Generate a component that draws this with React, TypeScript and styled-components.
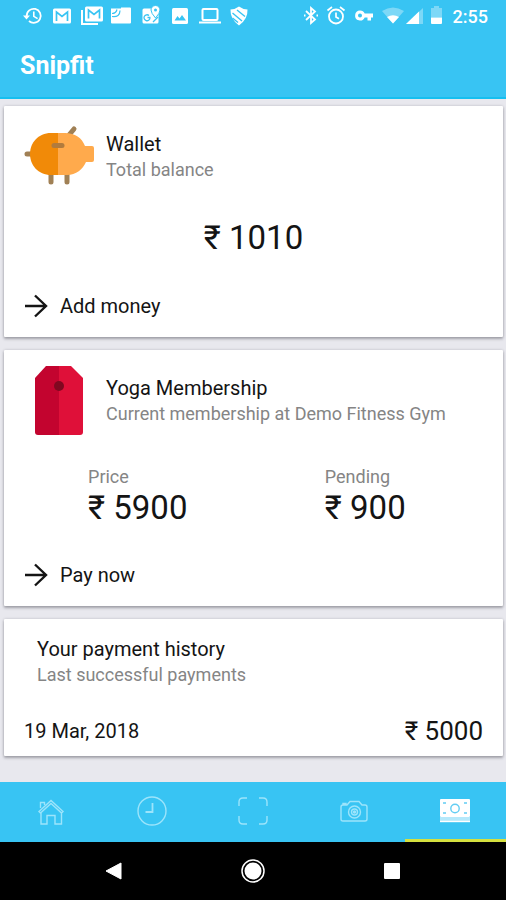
import React from "react";
import styled, { createGlobalStyle } from "styled-components";

const GlobalStyle = createGlobalStyle`
  *, *::before, *::after { box-sizing: border-box; }
  body {
    margin: 0;
    background: #e8e8ee;
    color: #141414;
    font-family: Roboto, "Noto Sans", sans-serif;
  }
  button { font: inherit; color: inherit; border: 0; padding: 0; background: none; cursor: pointer; }
  h1, h2, p, ul { margin: 0; padding: 0; font-weight: 400; }
  svg { display: block; flex: none; }
`;

const Screen = styled.div`
  display: flex;
  flex-direction: column;
  min-height: 100vh;
`;

const Header = styled.header`
  background: #38c4f3;
  border-bottom: 2px solid #16bff0;
  color: #fff;
`;

const StatusBar = styled.div`
  display: flex;
  justify-content: space-between;
  align-items: center;
  height: 32px;
  padding: 0 18px 0 22px;
`;

const Notifications = styled.div`
  display: flex;
  justify-content: space-between;
  width: 228px;
`;

const SystemIcons = styled.div`
  display: flex;
  align-items: center;
  gap: 7px;
`;

const Reception = styled.div`
  display: flex;
  gap: 2px;
`;

const Time = styled.time`
  margin-left: 3px;
  font-size: 18px;
  font-weight: 500;
`;

const AppTitle = styled.h1`
  padding: 19px 20px 16px;
  font-size: 25px;
  line-height: 30px;
  font-weight: 700;
`;

const Main = styled.main`
  flex: 1;
  display: flex;
  flex-direction: column;
  gap: 13px;
  padding: 7px 3px 26px 4px;
`;

const Card = styled.section`
  padding: 15px 20px 19px;
  background: #fff;
  border-radius: 1px;
  box-shadow: 0 2px 3px rgba(30, 30, 40, 0.32), 0 0 3px rgba(30, 30, 40, 0.18);
`;

const HistoryCard = styled(Card)`
  padding-top: 18px;
  padding-bottom: 9px;
`;

const CardHeader = styled.div`
  display: flex;
  align-items: center;
  gap: 12px;
`;

const CardHeading = styled.div`
  padding-top: 2px;
`;

const HistoryHeader = styled.div`
  padding-left: 13px;
`;

const Title = styled.h2`
  font-size: 20px;
  line-height: 25px;
`;

const Subtitle = styled.p`
  font-size: 18px;
  line-height: 25px;
  color: #858585;
`;

const Amount = styled.p`
  font-size: 33px;
  line-height: 40px;
`;

const Balance = styled(Amount)`
  margin: 27px 0 36px;
  text-align: center;
`;

const Stats = styled.div`
  display: grid;
  grid-template-columns: 1fr 1fr;
  justify-items: center;
  margin: 30px 0 35px;
  padding-right: 4px;
`;

const StatLabel = styled.p`
  font-size: 18px;
  line-height: 23px;
  color: #858585;
`;

const Action = styled.button`
  display: flex;
  align-items: center;
  gap: 12px;
  font-size: 20px;
  line-height: 24px;
`;

const PaymentRow = styled.li`
  display: flex;
  justify-content: space-between;
  align-items: center;
  margin-top: 28px;
  list-style: none;
  font-size: 20px;
  line-height: 32px;
`;

const PaymentAmount = styled.span`
  font-size: 26px;
`;

const TabBar = styled.nav`
  display: grid;
  grid-template-columns: repeat(5, 1fr);
  height: 60px;
  background: #38c4f3;
`;

const Tab = styled.button<{ $active?: boolean }>`
  display: flex;
  justify-content: center;
  align-items: center;
  padding-top: 1px;
  color: ${(p) => (p.$active ? "#fff" : "#9ce4fb")};
  border-bottom: 3px solid ${(p) => (p.$active ? "#d5e03f" : "transparent")};
`;

const SystemNav = styled.nav`
  display: grid;
  grid-template-columns: repeat(3, 1fr);
  height: 58px;
  padding: 0 44px;
  background: #000;
  color: #fff;
`;

const SystemButton = styled.button`
  display: flex;
  justify-content: center;
  align-items: center;
`;

type GlyphProps = { w?: number; children: React.ReactNode };

const StatusGlyph = ({ w = 22, children }: GlyphProps) => (
  <svg width={w} height="22" viewBox={`0 0 ${w} 22`} fill="currentColor" aria-hidden="true">
    {children}
  </svg>
);

const TabGlyph = ({ children }: { children: React.ReactNode }) => (
  <svg width="32" height="32" viewBox="0 0 32 32" fill="none" stroke="currentColor" strokeWidth="1.4" aria-hidden="true">
    {children}
  </svg>
);

const blue = "#38c4f3";

const PiggyBank = () => (
  <svg width="70" height="70" viewBox="0 0 70 70" aria-hidden="true">
    <g stroke="#a08055" strokeWidth="5" strokeLinecap="round">
      <path d="M3 33H8M27 50V61M43 50V61M45 14L50 8" />
    </g>
    <path d="M34 12V54H27C14 54 6 44 6 33S14 12 27 12Z" fill="#f18a08" />
    <path d="M34 12H41C51 12 58 17 61 25H68Q70 25 70 27V39Q70 41 68 41H62C59 48 52 54 43 54H34Z" fill="#ffaa4c" />
    <path d="M30 24.500H38" stroke="#b17b3d" strokeWidth="5" strokeLinecap="round" />
  </svg>
);

const PriceTag = () => (
  <svg width="70" height="70" viewBox="0 0 70 70" aria-hidden="true">
    <path d="M22 1H35V70H14Q11 70 11 67V13Z" fill="#c3042f" />
    <path d="M35 1H47L59 13V67Q59 70 56 70H35Z" fill="#df1039" />
    <circle cx="35" cy="21" r="5" fill="#7f0820" />
  </svg>
);

const ArrowRight = () => (
  <svg width="24" height="24" viewBox="0 0 24 24" fill="none" stroke="currentColor" strokeWidth="2.400" aria-hidden="true">
    <path d="M1 12H22M11 1.500L22 12L11 22.500" />
  </svg>
);

const NotificationIcons = () => (
  <Notifications>
    <StatusGlyph>
      <path d="M4.700 11A7 7 0 1 1 7 16" fill="none" stroke="currentColor" strokeWidth="1.800" />
      <path d="M1 10.500H8L4.500 14.500ZM11 6.500H12.600V11L16 13L15.200 14.300L11 11.800Z" />
    </StatusGlyph>
    <StatusGlyph>
      <rect x="2" y="3.500" width="18" height="15" rx="1.500" />
      <path d="M5.500 16V7L11 11.500L16.500 7V16" fill="none" stroke={blue} strokeWidth="1.700" />
    </StatusGlyph>
    <StatusGlyph>
      <path d="M1 5V19H17" fill="none" stroke="currentColor" strokeWidth="2" />
      <rect x="4" y="1.500" width="18" height="15" rx="1.500" />
      <path d="M7.500 13.500V5L13 9.500L18.500 5V13.500" fill="none" stroke={blue} strokeWidth="1.700" />
    </StatusGlyph>
    <StatusGlyph>
      <path d="M1 3.500H11V2.500H20Q21 2.500 21 3.500V17.500Q21 18.500 20 18.500H2Q1 18.500 1 17.500Z" />
      <path d="M2 11.500Q10 12.500 10 5.500M2 8.500Q6 8.500 7 4.500" fill="none" stroke={blue} strokeWidth="1.200" />
    </StatusGlyph>
    <StatusGlyph>
      <rect x="2.500" y="3.500" width="16" height="15" rx="1.500" />
      <path d="M15.500 0.500A4.500 4.500 0 0 1 20 5Q20 8 15.500 13Q11 8 11 5A4.500 4.500 0 0 1 15.500 0.500Z" stroke={blue} />
      <circle cx="15.500" cy="5" r="1.500" fill={blue} />
      <path d="M10.500 12.500H7.500M10 13A3 3 0 1 1 9 10.500M13 17L18 12" fill="none" stroke={blue} strokeWidth="1.300" />
    </StatusGlyph>
    <StatusGlyph>
      <rect x="3" y="3" width="16" height="16" rx="1.500" />
      <path d="M5.500 15.500L8.500 11L10.500 13.500L13 10L17 15.500Z" fill={blue} />
    </StatusGlyph>
    <StatusGlyph>
      <rect x="3.500" y="4" width="15" height="11" rx="1" fill="none" stroke="currentColor" strokeWidth="2" />
      <path d="M0 16.500H22V18.500H0Z" />
    </StatusGlyph>
    <StatusGlyph>
      <path d="M2.500 4.500Q7 4.500 11 1.500Q15 4.500 19.500 4.500Q20 14 11 20.500Q2 14 2.500 4.500Z" />
      <path d="M4.500 8L14 16M9 5L17 11.500M4.500 13L10 17.500" fill="none" stroke={blue} strokeWidth="1.400" />
    </StatusGlyph>
  </Notifications>
);

const DeviceIcons = () => (
  <>
    <StatusGlyph w={16}>
      <path d="M3 6L12 14.500L8 18V3L12 6.500L3 15M13.500 10.500H15M1 10.500H2.500" fill="none" stroke="currentColor" strokeWidth="1.800" />
    </StatusGlyph>
    <StatusGlyph w={20}>
      <circle cx="10" cy="11.500" r="7" fill="none" stroke="currentColor" strokeWidth="1.800" />
      <path d="M1.500 5.500L6 2M18.500 5.500L14 2M10 7.500V12L13 13.800" fill="none" stroke="currentColor" strokeWidth="1.700" />
    </StatusGlyph>
    <StatusGlyph w={22}>
      <path fillRule="evenodd" d="M7 5.500A5 5 0 0 1 11.700 8.500H20V12.500H18V15.500H14.500V12.500H11.700A5 5 0 1 1 7 5.500ZM7 8.500A2 2 0 1 0 7 12.500A2 2 0 1 0 7 8.500Z" />
    </StatusGlyph>
    <Reception>
      <StatusGlyph w={22}>
        <path opacity="0.350" d="M0 6Q11 -1 22 6L11 18.500Z" />
        <path d="M5 12Q11 8.500 17 12L11 18.500Z" />
      </StatusGlyph>
      <StatusGlyph w={18}>
        <path opacity="0.350" d="M17 3V19H0Z" />
        <path d="M13 6.500V19H0Z" />
      </StatusGlyph>
    </Reception>
    <StatusGlyph w={12}>
      <path opacity="0.350" d="M0 3H3V1H8V3H11V12.500H0Z" />
      <path d="M0 12.500H11V18Q11 19 10 19H1Q0 19 0 18Z" />
    </StatusGlyph>
  </>
);

const App = () => (
  <Screen>
    <GlobalStyle />
    <Header>
      <StatusBar>
        <NotificationIcons />
        <SystemIcons>
          <DeviceIcons />
          <Time>2:55</Time>
        </SystemIcons>
      </StatusBar>
      <AppTitle>Snipfit</AppTitle>
    </Header>

    <Main>
      <Card>
        <CardHeader>
          <PiggyBank />
          <CardHeading>
            <Title>Wallet</Title>
            <Subtitle>Total balance</Subtitle>
          </CardHeading>
        </CardHeader>
        <Balance>₹ 1010</Balance>
        <Action type="button">
          <ArrowRight />
          Add money
        </Action>
      </Card>

      <Card>
        <CardHeader>
          <PriceTag />
          <CardHeading>
            <Title>Yoga Membership</Title>
            <Subtitle>Current membership at Demo Fitness Gym</Subtitle>
          </CardHeading>
        </CardHeader>
        <Stats>
          <div>
            <StatLabel>Price</StatLabel>
            <Amount>₹ 5900</Amount>
          </div>
          <div>
            <StatLabel>Pending</StatLabel>
            <Amount>₹ 900</Amount>
          </div>
        </Stats>
        <Action type="button">
          <ArrowRight />
          Pay now
        </Action>
      </Card>

      <HistoryCard>
        <HistoryHeader>
          <Title>Your payment history</Title>
          <Subtitle>Last successful payments</Subtitle>
        </HistoryHeader>
        <ul>
          <PaymentRow>
            <span>19 Mar, 2018</span>
            <PaymentAmount>₹ 5000</PaymentAmount>
          </PaymentRow>
        </ul>
      </HistoryCard>
    </Main>

    <TabBar aria-label="Sections">
      <Tab type="button" aria-label="Home">
        <TabGlyph>
          <path d="M4 16.500L16 5.500L28 16.500L26.500 18L16 8.500L5.500 18ZM5.500 13V7.500H9.500V10M6 18V29H12V20.500H20V29H26.500V18M12 20.500H20" />
        </TabGlyph>
      </Tab>
      <Tab type="button" aria-label="Schedule">
        <TabGlyph>
          <circle cx="16" cy="16" r="14" />
          <path d="M16.500 8V17H9.500" strokeWidth="1.800" />
        </TabGlyph>
      </Tab>
      <Tab type="button" aria-label="Scan">
        <TabGlyph>
          <path d="M10 3H6Q2 3 2 7V11M22 3H26Q30 3 30 7V11M2 21V25Q2 29 6 29H10M30 21V25Q30 29 26 29H22" />
        </TabGlyph>
      </Tab>
      <Tab type="button" aria-label="Camera">
        <TabGlyph>
          <path d="M5 10H9L12 6.500H21L24 10H27Q29 10 29 12V24Q29 26 27 26H5Q3 26 3 24V12Q3 10 5 10ZM5 10V8.500H8V10" />
          <circle cx="16.500" cy="17" r="6" />
          <circle cx="16.500" cy="17" r="3" />
          <circle cx="16.500" cy="17" r="1" fill="currentColor" />
        </TabGlyph>
      </Tab>
      <Tab type="button" aria-label="Payments" aria-current="page" $active>
        <TabGlyph>
          <rect x="1" y="4" width="30" height="18" rx="1" fill="currentColor" stroke="none" />
          <path d="M1 22V27H31V22" fill="#b5e9fb" stroke="none" />
          <path d="M1 26.500H31" />
          <g stroke="#62cdf3">
            <circle cx="16" cy="13.500" r="4.200" />
            <path d="M4 8H7M25 8H28M4 18H7M25 18H28" />
          </g>
        </TabGlyph>
      </Tab>
    </TabBar>

    <SystemNav aria-label="System">
      <SystemButton type="button" aria-label="Back">
        <svg width="18" height="18" viewBox="0 0 18 18" fill="currentColor" aria-hidden="true">
          <path d="M16 1V17L1 9Z" strokeLinejoin="round" stroke="currentColor" />
        </svg>
      </SystemButton>
      <SystemButton type="button" aria-label="Home screen">
        <svg width="24" height="24" viewBox="0 0 24 24" fill="currentColor" aria-hidden="true">
          <circle cx="12" cy="12" r="8.500" />
          <circle cx="12" cy="12" r="11" fill="none" stroke="currentColor" strokeWidth="1.500" />
        </svg>
      </SystemButton>
      <SystemButton type="button" aria-label="Recent apps">
        <svg width="16" height="16" viewBox="0 0 16 16" fill="currentColor" aria-hidden="true">
          <rect width="16" height="16" rx="1" />
        </svg>
      </SystemButton>
    </SystemNav>
  </Screen>
);

export default App;
